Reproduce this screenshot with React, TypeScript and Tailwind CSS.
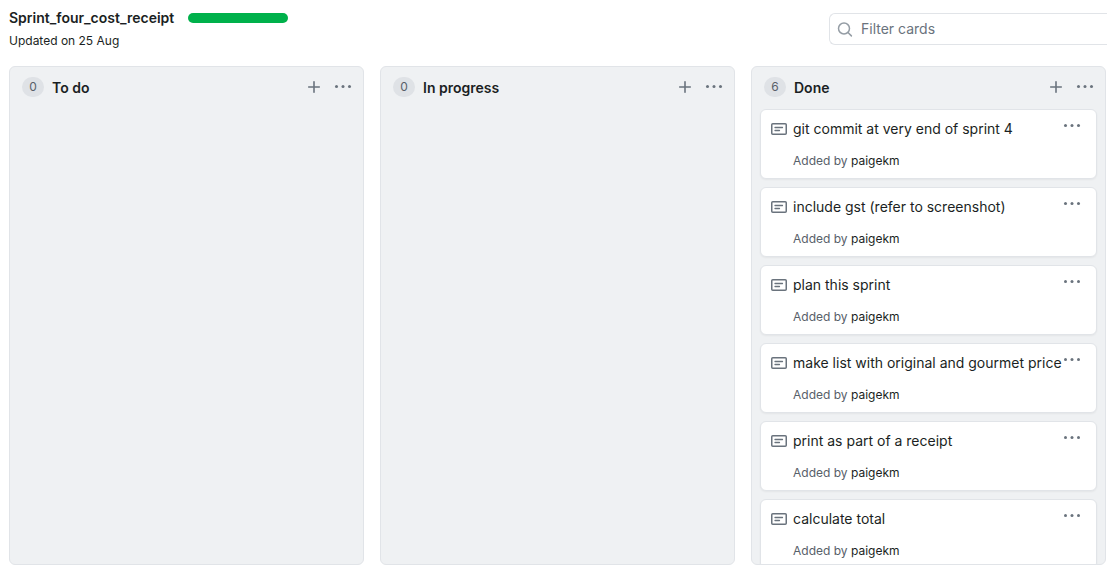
type Column = { id: string; title: string; cards: string[] };

const columns: Column[] = [
  { id: 'todo', title: 'To do', cards: [] },
  { id: 'progress', title: 'In progress', cards: [] },
  {
    id: 'done',
    title: 'Done',
    cards: [
      'git commit at very end of sprint 4',
      'include gst (refer to screenshot)',
      'plan this sprint',
      'make list with original and gourmet price',
      'print as part of a receipt',
      'calculate total',
    ],
  },
];

function SearchIcon() {
  return (
    <svg width="16" height="16" viewBox="0 0 16 16" fill="none" stroke="currentColor" strokeWidth="1.5" strokeLinecap="round" aria-hidden="true">
      <circle cx="7" cy="7.5" r="5.5" />
      <path d="M11 11.5l3.4 3.4" />
    </svg>
  );
}

function PlusIcon() {
  return (
    <svg width="16" height="16" viewBox="0 0 16 16" fill="none" stroke="currentColor" strokeWidth="1.6" strokeLinecap="round" aria-hidden="true">
      <path d="M8 2.7v10.6M2.7 8h10.6" />
    </svg>
  );
}

function KebabIcon() {
  return (
    <svg width="18" height="16" viewBox="0 0 18 16" fill="currentColor" aria-hidden="true">
      <circle cx="2.5" cy="7.5" r="1.5" />
      <circle cx="9" cy="7.5" r="1.5" />
      <circle cx="15.5" cy="7.5" r="1.5" />
    </svg>
  );
}

function NoteIcon() {
  return (
    <svg width="16" height="16" viewBox="0 0 16 16" fill="none" stroke="currentColor" strokeWidth="1.5" aria-hidden="true">
      <rect x="0.75" y="2.75" width="14.5" height="10.5" rx="1" />
      <path d="M4 6.5h7.5M4 9.5h4.5" strokeLinecap="round" strokeWidth="1.3" />
    </svg>
  );
}

function Card({ title }: { title: string }) {
  return (
    <li className="flex shrink-0 items-start rounded-md border border-[#e1e4e8] bg-white pt-2 pr-[15px] pb-2 pl-2.5 shadow-xs">
      <span className="mt-[3px] mr-1.5 text-[#6a737d]">
        <NoteIcon />
      </span>
      <div className="min-w-0 flex-1">
        <p className="text-sm leading-[22px] whitespace-nowrap">{title}</p>
        <p className="mt-3 text-xs leading-[18px] text-[#586069]">
          Added by{' '}
          <a href="#paigekm" className="text-[#1b1f23]">
            paigekm
          </a>
        </p>
      </div>
      <button type="button" aria-label={`Options for ${title}`} className="text-[#6a737d]">
        <KebabIcon />
      </button>
    </li>
  );
}

function BoardColumn({ column }: { column: Column }) {
  return (
    <section
      aria-labelledby={column.id}
      className="flex min-h-0 min-w-0 flex-col overflow-hidden rounded-md border border-[#e1e4e8] bg-[#eff1f3]"
    >
      <header className="flex h-[42px] shrink-0 items-start pt-2.5 pr-[11px] pl-3">
        <span className="flex h-5 w-[22px] items-center justify-center rounded-full bg-[#dfe2e6] text-xs text-[#586069]">
          {column.cards.length}
        </span>
        <h2 id={column.id} className="ml-2 flex-1 text-sm leading-[22px] font-semibold">
          {column.title}
        </h2>
        <div className="flex h-5 items-center gap-3 text-[#6a737d]">
          <button type="button" aria-label={`Add a card to ${column.title}`}>
            <PlusIcon />
          </button>
          <button type="button" aria-label={`Options for ${column.title}`}>
            <KebabIcon />
          </button>
        </div>
      </header>
      <ul className="flex min-h-0 flex-1 flex-col gap-2 overflow-hidden px-2">
        {column.cards.map((title) => (
          <Card key={title} title={title} />
        ))}
      </ul>
    </section>
  );
}

export default function App() {
  return (
    <main className="flex h-screen flex-col overflow-hidden bg-white pb-1 font-['Inter','Liberation_Sans',sans-serif] text-[#1b1f23]">
      <header className="flex h-[66px] shrink-0 items-start pl-[9px]">
        <div className="pt-2">
          <div className="flex items-center gap-3.5">
            <h1 className="text-sm leading-5 font-semibold">Sprint_four_cost_receipt</h1>
            <div
              role="progressbar"
              aria-label="Project progress"
              aria-valuenow={100}
              className="h-2.5 w-[100px] rounded-full bg-[#00b14b]"
            />
          </div>
          <p className="mt-1 text-xs leading-[18px]">Updated on 25 Aug</p>
        </div>
        <label className="mt-[13px] ml-auto flex h-8 w-[278px] items-center gap-2 rounded-l-md border border-r-0 border-[#e1e4e8] pl-[7px] text-[#959da5]">
          <SearchIcon />
          <input
            type="text"
            aria-label="Filter cards"
            placeholder="Filter cards"
            className="min-w-0 flex-1 bg-transparent text-sm outline-none placeholder:text-[#6a737d]"
          />
        </label>
      </header>
      <div className="grid min-h-0 flex-1 grid-cols-3 grid-rows-1 gap-4 pr-px pl-[9px]">
        {columns.map((column) => (
          <BoardColumn key={column.id} column={column} />
        ))}
      </div>
    </main>
  );
}
